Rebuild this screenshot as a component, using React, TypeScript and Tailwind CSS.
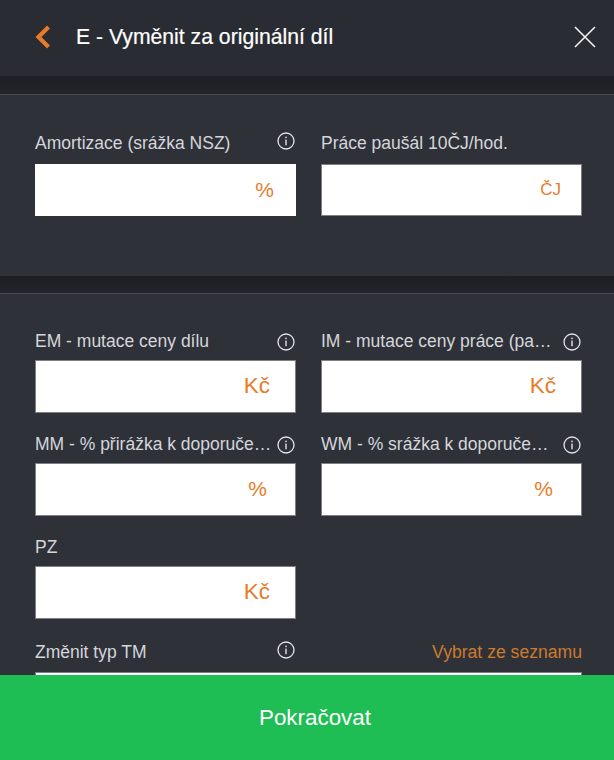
import React from "react";

function Info() {
  return (
    <svg width="18" height="18" viewBox="0 0 18 18" fill="none" className="shrink-0 text-[#e2e4e8]">
      <circle cx="9" cy="9" r="8" stroke="currentColor" strokeWidth="1.3" />
      <rect x="8.3" y="7.6" width="1.4" height="5.6" fill="currentColor" />
      <rect x="8.3" y="4.6" width="1.4" height="1.6" fill="currentColor" />
    </svg>
  );
}

function Field({
  label,
  unit,
  info = true,
  unitClass,
  border = true,
  labelClass = "",
  iconClass = "",
  boxClass = "h-[53px]",
}: {
  label: string;
  unit: string;
  info?: boolean;
  unitClass: string;
  border?: boolean;
  labelClass?: string;
  iconClass?: string;
  boxClass?: string;
}) {
  return (
    <div className="min-w-0">
      <div className="flex h-[27px] items-start justify-between pr-px">
        <span className={`whitespace-nowrap text-[17.5px] leading-[16px] text-[#d4d6da] ${labelClass}`}>{label}</span>
        {info && (
          <span className={`ml-[5px] ${iconClass}`}>
            <Info />
          </span>
        )}
      </div>
      <div className={`flex items-center justify-end bg-white ${boxClass} ${border ? "border border-[#7c7f86]" : ""}`}>
        <span className={`-mt-px text-[#e87b29] ${unitClass}`}>{unit}</span>
      </div>
    </div>
  );
}

function Band({ h }: { h: string }) {
  return <div className={`${h} border-b border-b-[#474a50] bg-gradient-to-b from-[#1d1f24] to-[#23252b]`} />;
}

export default function App() {
  return (
    <div className="relative h-[760px] w-[614px] overflow-hidden bg-[#2f3139] font-['Liberation_Sans',Arial,sans-serif]">
      <header className="flex h-[76px] items-center justify-between bg-[#2a2c33] pb-[2px] pl-[35px] pr-[18px]">
        <div className="flex items-center">
          <svg width="16" height="24" viewBox="0 0 16 24" fill="none">
            <path d="M13.5 2 L3.5 12 L13.5 22" stroke="#e87b29" strokeWidth="4.2" />
          </svg>
          <h1 className="ml-[25px] text-[21.2px] leading-[24px] text-white [-webkit-text-stroke:0.2px_white]">
            E - Vyměnit za originální díl
          </h1>
        </div>
        <svg width="22" height="22" viewBox="0 0 22 22" fill="none">
          <path d="M1 1 L21 21 M21 1 L1 21" stroke="#f2f2f2" strokeWidth="1.6" />
        </svg>
      </header>
      <Band h="h-[19px]" />
      <section className="h-[181px] pl-[35px] pr-[32px] pt-[42px]">
        <div className="grid grid-cols-2 gap-x-[25px]">
          <Field
            label="Amortizace (srážka NSZ)"
            unit="%"
            unitClass="text-[21px] pr-[22px]"
            border={false}
            labelClass="-mt-[2px]"
            iconClass="-mt-[5px]"
            boxClass="h-[52px]"
          />
          <Field
            label="Práce paušál 10ČJ/hod."
            unit="ČJ"
            info={false}
            unitClass="text-[17px] pr-[20px]"
            labelClass="-mt-[2px]"
            boxClass="h-[52px]"
          />
        </div>
      </section>
      <Band h="h-[18px]" />
      <section className="pl-[35px] pr-[32px] pt-[39px]">
        <div className="grid grid-cols-2 gap-x-[25px] gap-y-[23px]">
          <Field label="EM - mutace ceny dílu" unit="Kč" unitClass="text-[22.5px] pr-[25px]" />
          <Field label="IM - mutace ceny práce (pa…" unit="Kč" unitClass="text-[22.5px] pr-[25px]" />
          <Field label="MM - % přirážka k doporuče…" unit="%" unitClass="text-[21px] pr-[28px]" />
          <Field label="WM - % srážka k doporuče…" unit="%" unitClass="text-[21px] pr-[28px]" />
          <Field label="PZ" unit="Kč" info={false} unitClass="text-[22.5px] pr-[25px]" />
          <div />
          <div className="col-span-2 mt-[3px]">
            <div className="flex h-[27px] items-start justify-between">
              <div className="flex w-[261px] items-start justify-between pr-px">
                <span className="-mt-px text-[17.5px] leading-[16px] text-[#d4d6da]">Změnit typ TM</span>
                <span className="-mt-[4px]">
                  <Info />
                </span>
              </div>
              <span className="-mt-px text-[17.6px] leading-[16px] text-[#cc7a2e]">Vybrat ze seznamu</span>
            </div>
            <div className="h-[53px] border border-[#7c7f86] bg-white" />
          </div>
        </div>
      </section>
      <button className="absolute bottom-0 left-0 flex h-[85px] w-full items-center justify-center bg-[#1ebe55] pl-[16px] text-[22.4px] text-white">
        Pokračovat
      </button>
    </div>
  );
}
